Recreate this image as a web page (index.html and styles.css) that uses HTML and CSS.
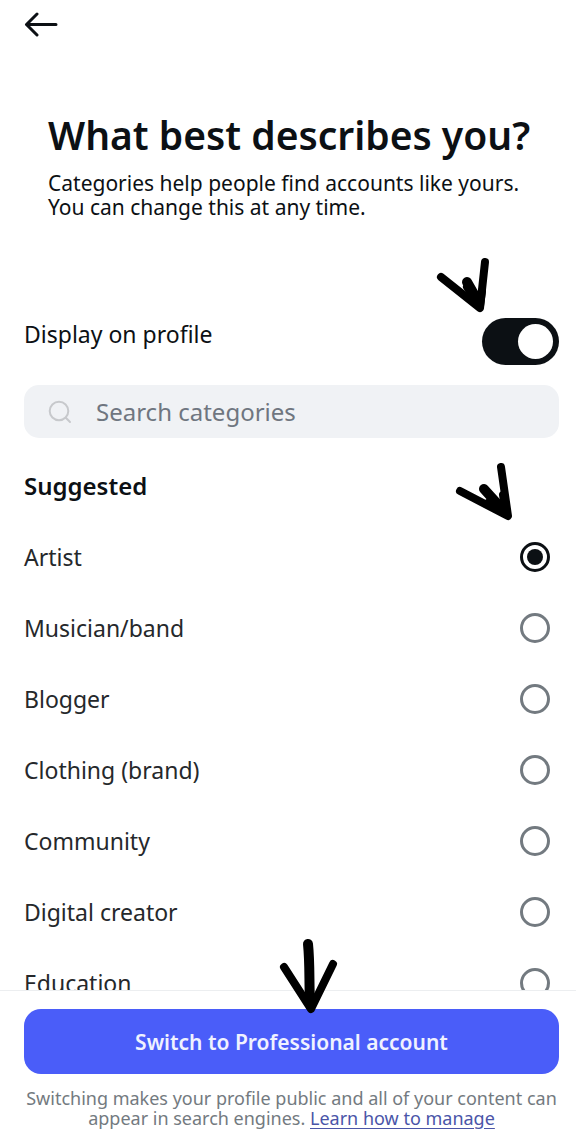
FILE: index.html
```html
<!DOCTYPE html>
<html lang="en">
<head>
<meta charset="utf-8">
<meta name="viewport" content="width=device-width, initial-scale=1">
<title>What best describes you?</title>
<link rel="stylesheet" href="styles.css">
</head>
<body>
<div class="screen">
  <main class="content">
    <header class="topbar">
      <button class="back" type="button" aria-label="Back">
        <svg width="34" height="26" viewBox="0 0 34 26" fill="none" stroke="currentColor" stroke-width="3" stroke-linecap="round" stroke-linejoin="round" aria-hidden="true">
          <path d="M32 12.500H2.500M13 2 2.500 12.500 13 23"/>
        </svg>
      </button>
    </header>

    <section class="intro">
      <h1 class="title">What best describes you?</h1>
      <p class="subtitle">Categories help people find accounts like yours. You can change this at any time.</p>
    </section>

    <div class="display-row">
      <label class="row-label" for="display">Display on profile</label>
      <input class="switch" type="checkbox" role="switch" id="display" checked>
      <svg class="pointer pointer-switch" width="60" height="62" viewBox="0 0 60 62" fill="none" stroke="currentColor" stroke-linecap="round" stroke-linejoin="round" aria-hidden="true">
        <path stroke-width="8" d="M6 22 45 53 50 7"/>
        <path stroke-width="10" d="M32 27 44 48"/>
        <path stroke-width="8" d="M32 32 45 51 47 36"/>
      </svg>
    </div>

    <div class="search">
      <svg class="search-icon" width="24" height="24" viewBox="0 0 24 24" fill="none" stroke="currentColor" stroke-width="2" stroke-linecap="round" aria-hidden="true">
        <circle cx="11" cy="11" r="9.300"/>
        <path d="m17.800 17.800 4.200 4.200"/>
      </svg>
      <input class="search-input" type="search" placeholder="Search categories" aria-label="Search categories">
    </div>

    <div class="suggested">
      <h2 class="section-title" id="suggested-title">Suggested</h2>
      <svg class="pointer pointer-option" width="60" height="60" viewBox="0 0 60 60" fill="none" stroke="currentColor" stroke-linecap="round" stroke-linejoin="round" aria-hidden="true">
        <path stroke-width="8" d="M6 30 54 55 47 6"/>
        <path stroke-width="10" d="M30 28 50 50"/>
        <path stroke-width="8" d="M34 42 52 53 49 34"/>
      </svg>
    </div>

    <div class="options" role="radiogroup" aria-labelledby="suggested-title">
      <label class="option"><span>Artist</span><input class="radio" type="radio" name="category" checked></label>
      <label class="option"><span>Musician/band</span><input class="radio" type="radio" name="category"></label>
      <label class="option"><span>Blogger</span><input class="radio" type="radio" name="category"></label>
      <label class="option"><span>Clothing (brand)</span><input class="radio" type="radio" name="category"></label>
      <label class="option"><span>Community</span><input class="radio" type="radio" name="category"></label>
      <label class="option"><span>Digital creator</span><input class="radio" type="radio" name="category"></label>
      <label class="option"><span>Education</span><input class="radio" type="radio" name="category"></label>
    </div>
  </main>

  <footer class="footer">
    <button class="primary" type="button">Switch to Professional account</button>
    <p class="note">Switching makes your profile public and all of your content can appear in search engines. <a class="link" href="#">Learn how to manage</a></p>
    <svg class="pointer pointer-submit" width="60" height="78" viewBox="0 0 60 78" fill="none" stroke="currentColor" stroke-linecap="round" stroke-linejoin="round" aria-hidden="true">
      <path stroke-width="10" d="M30 7C32 26 31 45 32 66"/>
      <path stroke-width="8" d="M6 30 33 72 55 27"/>
      <path stroke-width="6" d="M27 58 33 71 39 58"/>
    </svg>
  </footer>
</div>
</body>
</html>
```

FILE: styles.css
```css
* {
  box-sizing: border-box;
}

body {
  margin: 0;
  background: #fff;
  color: #0c1014;
  font-family: "Noto Sans", "Open Sans", sans-serif;
}

h1,
h2,
p {
  margin: 0;
}

button {
  border: 0;
  font: inherit;
  cursor: pointer;
}

.screen {
  display: flex;
  flex-direction: column;
  height: 100vh;
}

.content {
  flex: 1;
  min-height: 0;
  overflow: hidden;
  padding: 0 17px 0 24px;
}

.topbar {
  display: flex;
  padding-top: 12px;
}

.back {
  display: flex;
  padding: 0;
  background: none;
  color: inherit;
}

.intro {
  padding: 73px 24px 0 24px;
}

.title {
  font-size: 39px;
  line-height: 48px;
  font-weight: 600;
  white-space: nowrap;
}

.subtitle {
  margin-top: 12px;
  font-size: 21px;
  line-height: 24px;
}

.display-row {
  position: relative;
  display: flex;
  justify-content: space-between;
  align-items: flex-start;
  margin-top: 99px;
}

.row-label {
  font-size: 23px;
  line-height: 32px;
}

.switch {
  appearance: none;
  display: flex;
  justify-content: flex-end;
  align-items: center;
  width: 77px;
  height: 47px;
  margin: 0;
  padding: 6px;
  border-radius: 24px;
  background: #0c1014;
}

.switch::before {
  content: "";
  width: 35px;
  height: 35px;
  border-radius: 50%;
  background: #fff;
}

.switch:not(:checked) {
  justify-content: flex-start;
  background: #a8b0b8;
}

.search {
  display: flex;
  align-items: center;
  gap: 24px;
  height: 53px;
  margin-top: 20px;
  padding: 0 24px;
  border-radius: 15px;
  background: #f0f2f5;
}

.search-icon {
  flex: none;
  color: #c7c9cc;
}

.search-input {
  flex: 1;
  min-width: 0;
  padding: 0;
  border: 0;
  outline: 0;
  background: none;
  color: inherit;
  font: inherit;
  font-size: 24px;
}

.search-input::placeholder {
  color: #6f7680;
  opacity: 1;
}

.suggested {
  position: relative;
  margin-top: 32px;
}

.section-title {
  font-size: 24px;
  line-height: 32px;
  font-weight: 600;
}

.options {
  margin-top: 19px;
}

.option {
  display: flex;
  justify-content: space-between;
  align-items: center;
  height: 71px;
  padding-right: 9px;
  color: #25282b;
  font-size: 23px;
}

.radio {
  appearance: none;
  display: grid;
  place-items: center;
  width: 30px;
  height: 30px;
  margin: 0;
  border: 3px solid #737a80;
  border-radius: 50%;
}

.radio:checked {
  border-color: #0c1014;
}

.radio:checked::before {
  content: "";
  width: 16px;
  height: 16px;
  border-radius: 50%;
  background: #0c1014;
}

.footer {
  position: relative;
  padding: 18px 17px 18px 24px;
  border-top: 1px solid #eceef0;
  background: #fff;
}

.primary {
  display: block;
  width: 100%;
  height: 65px;
  border-radius: 17px;
  background: #4a5df9;
  color: #f0f2ff;
  font-size: 21px;
  font-weight: 600;
}

.note {
  margin-top: 14px;
  color: #737a80;
  font-size: 18px;
  line-height: 20px;
  text-align: center;
}

.link {
  color: #4a55a8;
  text-underline-offset: 3px;
}

/* Hand-drawn arrows laid over the controls they point at */
.pointer {
  position: absolute;
  color: #000;
  pointer-events: none;
}

.pointer-switch {
  right: 64px;
  bottom: 48px;
}

.pointer-option {
  right: 45px;
  top: -9px;
}

.pointer-submit {
  left: calc(50% - 10px);
  top: -54px;
}
```
